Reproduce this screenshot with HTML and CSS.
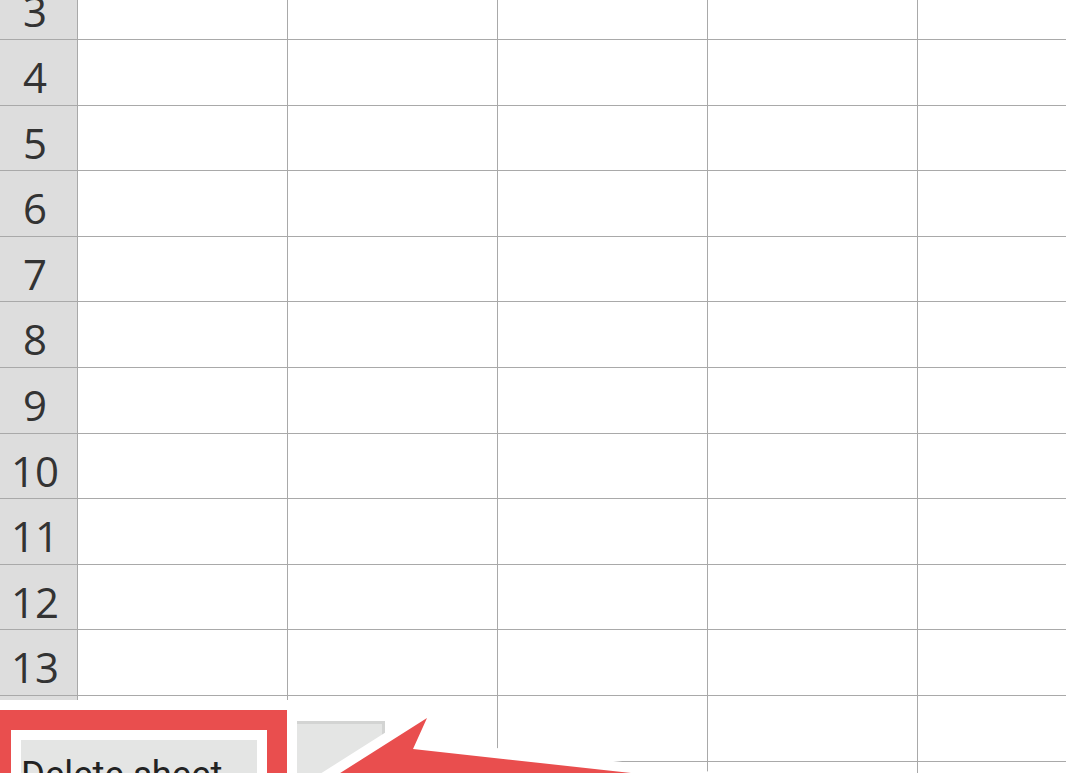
FILE: index.html
```html
<!DOCTYPE html>
<html lang="en">
<head>
<meta charset="utf-8">
<title>Sheet</title>
<link rel="stylesheet" href="styles.css">
</head>
<body>
<div class="viewport">
  <div class="sheet">
    <div class="rh">3</div><div class="c"></div><div class="c"></div><div class="c"></div><div class="c"></div><div class="c"></div>
    <div class="rh">4</div><div class="c"></div><div class="c"></div><div class="c"></div><div class="c"></div><div class="c"></div>
    <div class="rh">5</div><div class="c"></div><div class="c"></div><div class="c"></div><div class="c"></div><div class="c"></div>
    <div class="rh">6</div><div class="c"></div><div class="c"></div><div class="c"></div><div class="c"></div><div class="c"></div>
    <div class="rh">7</div><div class="c"></div><div class="c"></div><div class="c"></div><div class="c"></div><div class="c"></div>
    <div class="rh">8</div><div class="c"></div><div class="c"></div><div class="c"></div><div class="c"></div><div class="c"></div>
    <div class="rh">9</div><div class="c"></div><div class="c"></div><div class="c"></div><div class="c"></div><div class="c"></div>
    <div class="rh">10</div><div class="c"></div><div class="c"></div><div class="c"></div><div class="c"></div><div class="c"></div>
    <div class="rh">11</div><div class="c"></div><div class="c"></div><div class="c"></div><div class="c"></div><div class="c"></div>
    <div class="rh">12</div><div class="c"></div><div class="c"></div><div class="c"></div><div class="c"></div><div class="c"></div>
    <div class="rh">13</div><div class="c"></div><div class="c"></div><div class="c"></div><div class="c"></div><div class="c"></div>
    <div class="rh"></div><div class="c"></div><div class="c"></div><div class="c"></div><div class="c"></div><div class="c"></div>
    <div class="rh"></div><div class="c"></div><div class="c"></div><div class="c"></div><div class="c"></div><div class="c"></div>
  </div>

  <div class="tabbar">
    <div class="highlight">
      <div class="menu-btn">Delete sheet</div>
    </div>
    <div class="sheet-tab"></div>
  </div>

  <svg class="arrow" width="1066" height="773" viewBox="0 0 1066 773" aria-hidden="true">
    <polygon points="427,718 413,749 740,785 740,830 250,830 266,820" fill="#e94e4e" stroke="#ffffff" stroke-width="20" stroke-linejoin="round" paint-order="stroke"/>
  </svg>
</div>
</body>
</html>
```

FILE: styles.css
```css
html, body {
  margin: 0;
  padding: 0;
  background: #ffffff;
}

.viewport {
  position: relative;
  width: 1066px;
  height: 773px;
  overflow: hidden;
  background: #ffffff;
}

.sheet {
  display: grid;
  grid-template-columns: 78px repeat(5, 210px);
  grid-auto-rows: 65.6px;
  margin-top: -25.6px;
}

.rh,
.c {
  box-sizing: border-box;
  border-right: 1px solid #a9a9a9;
  border-bottom: 1px solid #a9a9a9;
}

.rh {
  background: #dddddd;
  color: #333333;
  font-family: "Open Sans", "Noto Sans", sans-serif;
  font-size: 42px;
  line-height: 56px;
  padding-top: 9px;
  padding-right: 7px;
  text-align: center;
}

.c {
  background: #ffffff;
}

.tabbar {
  position: absolute;
  left: 0;
  top: 700px;
  width: 440px;
  height: 73px;
  background: #ffffff;
  display: flex;
  align-items: flex-start;
  gap: 10px;
}

.highlight {
  margin-left: -9px;
  margin-top: 10px;
  border: 20px solid #e94e4e;
  padding: 10px;
  background: #ffffff;
}

.menu-btn {
  width: 236px;
  height: 60px;
  background: #e4e5e4;
  font-family: Roboto, "Liberation Sans", sans-serif;
  font-size: 36.5px;
  line-height: 1;
  color: #222222;
  padding-top: 17px;
  box-sizing: border-box;
  white-space: nowrap;
  overflow: hidden;
}

.sheet-tab {
  margin-top: 21px;
  width: 88px;
  height: 60px;
  box-sizing: border-box;
  background: #e4e5e4;
  border-top: 3px solid #d3d4d3;
  border-right: 3px solid #d3d4d3;
}

.arrow {
  position: absolute;
  left: 0;
  top: 0;
  pointer-events: none;
}
```
